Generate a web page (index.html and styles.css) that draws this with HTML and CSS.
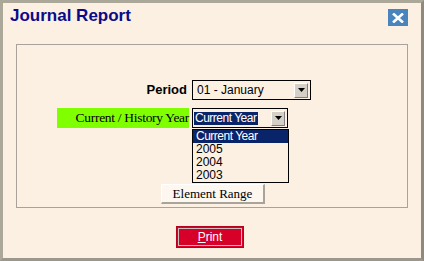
FILE: index.html
```html
<!DOCTYPE html>
<html lang="en">
<head>
    <meta charset="UTF-8">
    <title>Journal Report</title>
    <link rel="stylesheet" href="styles.css">
</head>
<body>

<div class="window">
    <div class="title-bar">
        <h1>Journal Report</h1>
        <button class="close-btn" aria-label="Close">
            <svg width="12" height="10" viewBox="0 0 12 10"><path d="M1 0.5 L11 9.5 M11 0.5 L1 9.5" stroke="#fff" stroke-width="2.6"/></svg>
        </button>
    </div>

    <div class="panel">
        <div class="form-grid">
            <label class="field-label bold">Period</label>
            <div class="combo wide">
                <span class="combo-text">01 - January</span>
                <span class="combo-arrow"><svg width="7" height="4" viewBox="0 0 7 4"><path d="M0 0 H7 L3.5 4 Z" fill="#000"/></svg></span>
            </div>

            <label class="field-label required">Current / History Year</label>
            <div class="combo narrow open">
                <span class="combo-text selected">Current Year</span>
                <span class="combo-arrow"><svg width="7" height="4" viewBox="0 0 7 4"><path d="M0 0 H7 L3.5 4 Z" fill="#000"/></svg></span>
                <ul class="combo-list">
                    <li class="selected">Current Year</li>
                    <li>2005</li>
                    <li>2004</li>
                    <li>2003</li>
                </ul>
            </div>
        </div>

        <div class="range-row">
            <button class="range-btn">Element Range</button>
        </div>
    </div>

    <div class="actions">
        <button class="print-btn"><span><u>P</u>rint</span></button>
    </div>
</div>

</body>
</html>
```

FILE: styles.css
```css
:root {
    --bg: #fbf0e2;
    --frame: #aca899;
    --navy: #0a246a;
}

html, body { margin: 0; padding: 0; }

body {
    font-family: 'Liberation Sans', Arial, sans-serif;
    background: var(--bg);
}

.window {
    width: 424px;
    height: 261px;
    box-sizing: border-box;
    border: 3px solid var(--frame);
    border-right-color: #8f8a80;
    border-bottom-color: #9c978d;
    background: var(--bg);
}

.title-bar {
    display: flex;
    justify-content: space-between;
    align-items: flex-start;
    padding: 3px 13px 0 7px;
    height: 38px;
}

h1 {
    margin: 0;
    font-size: 17px;
    line-height: 20px;
    font-weight: bold;
    color: #0b0b8a;
}

.close-btn {
    width: 20px;
    height: 17px;
    margin-top: 3px;
    padding: 0;
    border: none;
    background: #4a84bd;
    display: flex;
    align-items: center;
    justify-content: center;
}

.panel {
    margin: 0 13px;
    height: 164px;
    box-sizing: border-box;
    border: 1px solid #a9a29a;
    padding-top: 35px;
}

.form-grid {
    display: grid;
    grid-template-columns: 171px auto;
    column-gap: 4px;
    row-gap: 8px;
    align-items: center;
}

.field-label {
    justify-self: end;
    font-size: 13px;
    height: 20px;
    line-height: 20px;
}

.bold { font-weight: bold; padding-right: 1px; }

.required {
    background: #80ff00;
    width: 132px;
    text-align: right;
    font-family: 'Liberation Serif', 'Times New Roman', serif;
    font-size: 13.5px;
    letter-spacing: -0.3px;
    margin-right: -1px;
    box-sizing: border-box;
}

.combo {
    position: relative;
    display: flex;
    align-items: center;
    justify-content: space-between;
    height: 20px;
    box-sizing: border-box;
    border: 1px solid #000;
    padding: 0 2px 0 3px;
    font-size: 12px;
}

.combo.wide { width: 119px; }
.combo.narrow { width: 96px; padding-left: 1px; }

.combo-text { line-height: 14px; padding: 0 1px; }
.combo-text.selected {
    background: var(--navy);
    color: #fff;
    letter-spacing: -0.5px;
    line-height: 13px;
    padding: 0 2px 0 1px;
}

.combo-arrow {
    width: 14px;
    height: 15px;
    box-sizing: border-box;
    background: #d4d0c8;
    border: 1px solid #fff;
    border-right-color: #808080;
    border-bottom-color: #808080;
    display: flex;
    align-items: center;
    justify-content: center;
}

.combo-list {
    position: absolute;
    left: -1px;
    top: 20px;
    width: 95px;
    margin: 0;
    padding: 0;
    list-style: none;
    background: var(--bg);
    border: 1px solid #000;
    font-size: 12px;
}

.combo-list li { height: 13px; line-height: 13px; padding-left: 3px; }
.combo-list li.selected { background: var(--navy); color: #fff; letter-spacing: -0.5px; }

.range-row {
    display: flex;
    justify-content: center;
    margin-top: 56px;
}

.range-btn {
    width: 104px;
    height: 20px;
    padding: 0;
    font-family: 'Liberation Serif', 'Times New Roman', serif;
    font-size: 13px;
    background: #fdf7f0;
    border: 1px solid #fff;
    border-right: 2px solid #a8a49c;
    border-bottom: 2px solid #a8a49c;
    margin-left: 2px;
}

.actions {
    display: flex;
    justify-content: center;
    padding-top: 18px;
    margin-left: -4px;
}

.print-btn {
    width: 68px;
    height: 22px;
    padding: 1px;
    border: 1px solid #b8001c;
    background: #d70028;
}

.print-btn span {
    display: block;
    height: 100%;
    box-sizing: border-box;
    border: 1px solid #c8c0c0;
    color: #fff;
    font-size: 12px;
    line-height: 16px;
}
```
